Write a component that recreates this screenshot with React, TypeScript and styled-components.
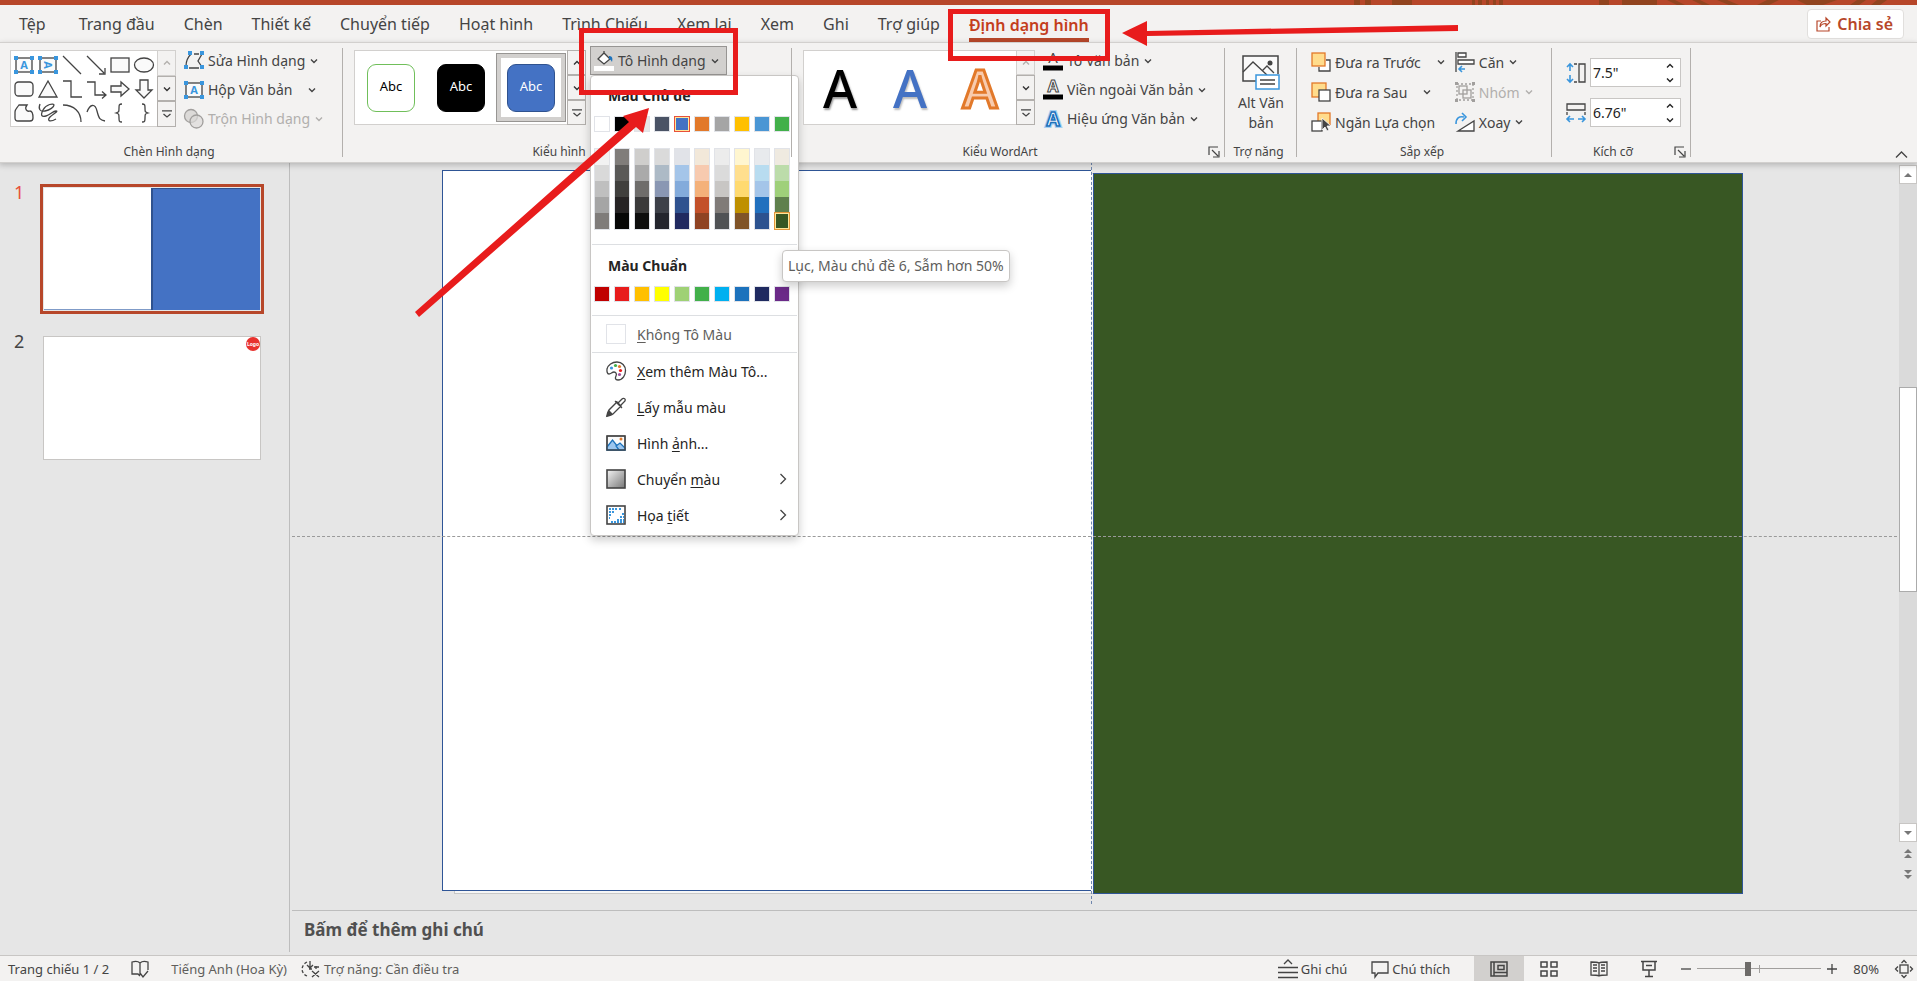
import React from "react";
import styled, { createGlobalStyle, css } from "styled-components";

const ink = "#444444";
const blue = "#3a96dd";
const brand = "#b7472a";
const alert = "#e81c1c";

const GlobalStyle = createGlobalStyle`
  * { box-sizing: border-box; }
  body { margin: 0; background: #e6e6e6; color: ${ink}; font-family: "Noto Sans", "Open Sans", sans-serif; font-size: 14px; }
  button, input, textarea { font: inherit; color: inherit; margin: 0; }
  button { background: none; border: 0; padding: 0; text-align: left; cursor: pointer; }
`;

const Page = styled.div`
  position: relative;
  display: flex;
  flex-direction: column;
  min-height: 100vh;
  overflow: hidden;
`;

const TitleStrip = styled.div`
  display: flex;
  justify-content: flex-end;
  height: 5px;
  background: ${brand};
`;

const Header = styled.header`
  display: flex;
  justify-content: space-between;
  align-items: flex-start;
  height: 38px;
  padding: 0 13px 0 5px;
  background: #f3f2f1;
`;

const Tabs = styled.nav`
  display: flex;
  gap: 1px;
`;

const Tab = styled.button<{ $active?: boolean }>`
  height: 38px;
  padding: 0 14px;
  font-size: 16px;
  line-height: 38px;
  white-space: nowrap;
  ${(p) =>
    p.$active &&
    css`
      color: #c43e1c;
      font-weight: 600;
      span { display: block; height: 36px; border-bottom: 4px solid ${brand}; }
    `}
  &:first-child { margin-right: 4px; }
`;

const Share = styled.button`
  display: flex;
  align-items: center;
  gap: 6px;
  height: 30px;
  margin-top: 4px;
  padding: 0 10px 0 8px;
  background: #fff;
  border: 1px solid #e1dfdd;
  border-radius: 4px;
  color: ${brand};
  font-size: 16px;
  font-weight: 600;
`;

const Ribbon = styled.section`
  position: relative;
  z-index: 5;
  display: grid;
  grid-template-columns: 343px 449px 433px 72px 255px 139px 1fr;
  height: 119px;
  padding-top: 3px;
  background: #f3f2f1;
  box-shadow: 0 0 0 1px #d2d0ce, 0 2px 6px 1px rgba(0, 0, 0, 0.22);
`;

const Group = styled.div`
  position: relative;
  display: flex;
  flex-direction: column;
  &::after {
    content: "";
    position: absolute;
    right: 0;
    top: 2px;
    bottom: 5px;
    width: 1px;
    background: #b3b0ad;
  }
`;

const Body = styled.div<{ $left?: number; $gap?: number }>`
  display: flex;
  align-items: flex-start;
  height: 97px;
  padding-left: ${(p) => p.$left ?? 11}px;
  gap: ${(p) => p.$gap ?? 8}px;
`;

const GroupFooter = styled.div`
  display: flex;
  align-items: center;
  height: 18px;
  padding-right: 5px;
  font-size: 12px;
  line-height: 18px;
`;

const GroupName = styled.span`
  flex: 1;
  text-align: center;
  white-space: nowrap;
`;

const Launcher = styled.button`
  display: flex;
  width: 12px;
  height: 12px;
`;

const Gallery = styled.div<{ $low?: boolean }>`
  display: flex;
  margin-top: 4px;
  height: ${(p) => (p.$low ? 75 : 77)}px;
  background: #fff;
  border: 1px solid #d2d0ce;
`;

const ShapeGrid = styled.div`
  display: grid;
  grid-template-columns: repeat(6, 24px);
  grid-auto-rows: 24px;
  place-items: center;
  padding: 2px 0 0 1px;
  width: 146px;
`;

const StyleRow = styled.div`
  display: flex;
  align-items: center;
  width: 212px;
  padding-left: 1px;
`;

const StyleCell = styled.button<{ $selected?: boolean }>`
  display: flex;
  align-items: center;
  justify-content: center;
  width: 70px;
  height: 69px;
  border: ${(p) => (p.$selected ? "1px solid #979593" : "0")};
  box-shadow: ${(p) => (p.$selected ? "inset 0 0 0 4px #d2d0ce" : "none")};
`;

const StyleTile = styled.span<{ $bg: string; $fg: string; $line: string }>`
  display: block;
  width: 48px;
  height: 48px;
  border: 1px solid ${(p) => p.$line};
  border-radius: 9px;
  background: ${(p) => p.$bg};
  color: ${(p) => p.$fg};
  font-size: 13px;
  line-height: 42px;
  text-align: center;
`;

const ArtLetter = styled.span<{ $kind: "black" | "blue" | "outline" }>`
  font-size: 52px;
  line-height: 60px;
  font-weight: 500;
  ${(p) => p.$kind === "black" && css`color: #000; text-shadow: 1px 2px 2px #0006;`}
  ${(p) => p.$kind === "blue" && css`color: #4472c4; text-shadow: 1px 2px 2px #0004;`}
  ${(p) => p.$kind === "outline" && css`color: #f8cbad; font-weight: 600; -webkit-text-stroke: 3px #e2792a; stroke-linejoin: round;`}
`;

const Scroller = styled.div`
  display: flex;
  flex-direction: column;
  width: 19px;
  margin: -1px -1px -1px auto;
`;

const ScrollButton = styled.button<{ $off?: boolean }>`
  display: flex;
  flex: 1;
  align-items: center;
  justify-content: center;
  background: #f3f2f1;
  border: 1px solid ${(p) => (p.$off ? "#d2d0ce" : "#b3b0ad")};
  color: ${(p) => (p.$off ? "#b3b0ad" : "#333")};
`;

const Commands = styled.div<{ $top?: number; $row?: number }>`
  display: grid;
  grid-auto-rows: ${(p) => p.$row ?? 29}px;
  padding-top: ${(p) => p.$top ?? 0}px;
  justify-items: start;
`;

const Command = styled.button<{ $off?: boolean; $open?: boolean; $wide?: boolean }>`
  display: flex;
  align-items: center;
  gap: 4px;
  white-space: nowrap;
  color: ${(p) => (p.$off ? "#b1afad" : ink)};
  svg:last-child { margin-left: ${(p) => (p.$wide ? 12 : 1)}px; }
  ${(p) =>
    p.$open &&
    css`
      width: 137px;
      padding-left: 3px;
      background: #d2d0ce;
      border: 1px solid #979593;
    `}
`;

const Anchor = styled.div`
  position: relative;
  margin-left: -4px;
`;

const AltButton = styled.button`
  display: flex;
  flex-direction: column;
  align-items: center;
  width: 100%;
  padding-top: 9px;
  line-height: 20px;
  text-align: center;
  svg { margin-bottom: 2px; }
`;

const SizeFields = styled.div`
  display: grid;
  gap: 11px;
  padding-top: 12px;
`;

const SizeField = styled.label`
  display: flex;
  align-items: center;
  gap: 4px;
`;

const SizeBox = styled.span`
  display: flex;
  align-items: center;
  width: 91px;
  height: 29px;
  padding: 0 6px 0 2px;
  background: #fff;
  border: 1px solid #c8c6c4;
  color: #222;
  input { flex: 1; min-width: 0; width: 60px; border: 0; padding: 0; outline: 0; background: none; }
`;

const Spin = styled.span`
  display: grid;
  gap: 8px;
  button { display: flex; }
`;

const Collapse = styled.button`
  align-self: end;
  justify-self: end;
  padding: 0 9px 3px;
`;

/* Fill menu */
const Menu = styled.div`
  position: absolute;
  left: 0;
  top: 29px;
  width: 209px;
  padding-bottom: 2px;
  background: #fff;
  border: 1px solid #c8c6c4;
  border-radius: 4px;
  box-shadow: 0 4px 10px rgba(0, 0, 0, 0.2);
  color: #252423;
`;

const MenuHeading = styled.h2<{ $first?: boolean }>`
  margin: 0;
  padding: ${(p) => (p.$first ? "10px 0 0 17px" : "11px 0 0 17px")};
  font-size: 14px;
  font-weight: 700;
  line-height: 20px;
`;

const SwatchRow = styled.div<{ $top: number; $bottom: number }>`
  display: flex;
  gap: 4px;
  padding: ${(p) => p.$top}px 0 ${(p) => p.$bottom}px 3px;
`;

const SwatchColumn = styled.div`
  display: grid;
  grid-auto-rows: 16px;
  border: 1px solid #e1e3e8;
  margin-bottom: -2px;
`;

const Swatch = styled.button<{ $c: string; $framed?: boolean; $pick?: string }>`
  width: ${(p) => (p.$framed ? 16 : 14)}px;
  height: 16px;
  background: ${(p) => p.$c};
  border: ${(p) => (p.$framed ? "1px solid #e1e3e8" : "0")};
  ${(p) =>
    p.$pick &&
    css`
      outline: 1px solid ${p.$pick};
      outline-offset: ${p.$framed ? -1 : 0}px;
      box-shadow: inset 0 0 0 1px #ffe699;
    `}
`;

const Rule = styled.hr`
  height: 1px;
  margin: 0 1px;
  border: 0;
  background: #dddfe2;
`;

const MenuItem = styled.button<{ $soft?: boolean }>`
  display: flex;
  align-items: center;
  gap: 11px;
  width: 100%;
  height: 36px;
  padding: 0 11px 0 15px;
  color: ${(p) => (p.$soft ? "#605e5c" : "#252423")};
  span { flex: 1; white-space: nowrap; }
  u { text-underline-offset: 2px; }
`;

const NoFill = styled.i`
  width: 20px;
  height: 20px;
  border: 1px solid #e1e3e8;
`;

const Tooltip = styled.div`
  position: absolute;
  left: 191px;
  top: 174px;
  padding: 0 5px;
  background: #fff;
  border: 1px solid #c8c6c4;
  border-radius: 4px;
  box-shadow: 0 4px 10px rgba(0, 0, 0, 0.2);
  color: #605e5c;
  line-height: 30px;
  white-space: nowrap;
`;

/* Workspace */
const Workspace = styled.main`
  display: flex;
  flex: 1;
`;

const SlideList = styled.aside`
  width: 290px;
  padding: 22px 0 0 14px;
  border-right: 1px solid #bdbdbd;
  margin-bottom: 3px;
`;

const SlideEntry = styled.button<{ $active?: boolean }>`
  display: flex;
  align-items: flex-start;
  margin-bottom: 19px;
  font-size: 18px;
  line-height: 16px;
  color: ${(p) => (p.$active ? "#e8503a" : ink)};
  > span:first-child { width: 26px; }
`;

const Thumb = styled.span<{ $active?: boolean }>`
  display: flex;
  width: 224px;
  height: 130px;
  border: 3px solid ${(p) => (p.$active ? brand : "transparent")};
  padding: ${(p) => (p.$active ? 1 : 0)}px;
`;

const ThumbHalf = styled.span<{ $blue?: boolean }>`
  flex: 1;
  background: ${(p) => (p.$blue ? "#4472c4" : "#fff")};
  border: solid #2f528f;
  border-width: ${(p) => (p.$blue ? "1px 0 0 2px" : "0")};
  border-bottom: ${(p) => (p.$blue ? "0" : "1px solid #7f9bc8")};
`;

const ThumbBlank = styled.span`
  display: flex;
  flex: 1;
  justify-content: flex-end;
  background: #fff;
  border: 1px solid #c8c6c4;
`;

const Logo = styled.span`
  width: 14px;
  height: 14px;
  border-radius: 50%;
  background: #e8332f;
  color: #fff;
  font-size: 5px;
  font-weight: 700;
  line-height: 14px;
  text-align: center;
`;

const Editor = styled.div`
  display: flex;
  flex: 1;
  flex-direction: column;
  margin-left: 2px;
`;

const CanvasRow = styled.div`
  display: flex;
  flex: 1;
  border-bottom: 1px solid #bdbdbd;
`;

const Canvas = styled.div`
  position: relative;
  display: flex;
  flex: 1;
  padding: 8px 156px 16px 150px;
`;

const WhiteShape = styled.div`
  flex: 1;
  margin-bottom: 3px;
  background: #fff;
  border: 1px solid #2f5597;
  border-right: 0;
  box-shadow: 12px 3px 0 -1px #f6f6f6, 12px 3px 0 0 #c8c8c8;
`;

const GreenShape = styled.div`
  position: relative;
  flex: 1;
  margin: 3px 0 0 2px;
  background: #385723;
  border: 1px solid #2f5597;
`;

const GuideH = styled.div`
  position: absolute;
  left: 0;
  right: 2px;
  top: 50%;
  border-top: 1px dashed #9a9a9a;
`;

const GuideV = styled.div`
  position: absolute;
  left: 799px;
  top: 0;
  bottom: 6px;
  border-left: 1px dashed #6f86ad;
`;

const VScroll = styled.div`
  display: flex;
  flex-direction: column;
  width: 18px;
  padding-top: 3px;
`;

const Track = styled.div`
  display: flex;
  flex: 1;
  flex-direction: column;
  background: #dadada;
`;

const Knob = styled.div`
  height: 32%;
  margin: auto 0;
  background: #fff;
  border: 1px solid #ababab;
  transform: translateY(-14px);
`;

const Step = styled.button<{ $plain?: boolean }>`
  display: flex;
  align-items: center;
  justify-content: center;
  height: ${(p) => (p.$plain ? 22 : 19)}px;
  background: ${(p) => (p.$plain ? "none" : "#fff")};
  border: ${(p) => (p.$plain ? "0" : "1px solid #c8c6c4")};
`;

const StepFoot = styled.div`
  display: grid;
  padding-bottom: 24px;
`;

const Notes = styled.textarea`
  display: block;
  width: 100%;
  height: 44px;
  padding: 7px 12px;
  border: 0;
  outline: 0;
  resize: none;
  background: #e6e6e6;
  font-size: 17px;
  font-weight: 700;
  line-height: 24px;
  &::placeholder { color: #505050; opacity: 1; }
`;

const Status = styled.footer`
  display: flex;
  justify-content: space-between;
  height: 26px;
  padding: 0 4px 0 8px;
  background: #f3f2f1;
  border-top: 1px solid #c8c6c4;
  font-size: 13px;
`;

const Cluster = styled.div<{ $gap: number }>`
  display: flex;
  align-items: center;
  gap: ${(p) => p.$gap}px;
`;

const StatusButton = styled.button<{ $soft?: boolean }>`
  display: flex;
  align-items: center;
  gap: 3px;
  white-space: nowrap;
  color: ${(p) => (p.$soft ? "#605e5c" : ink)};
`;

const Views = styled.div`
  display: flex;
`;

const ViewButton = styled.button<{ $active?: boolean }>`
  display: flex;
  align-items: center;
  justify-content: center;
  width: 50px;
  height: 25px;
  background: ${(p) => (p.$active ? "#d2d0ce" : "none")};
`;

const ZoomRange = styled.input`
  appearance: none;
  width: 124px;
  height: 18px;
  background: linear-gradient(#a19f9d, #a19f9d) center / 100% 1px no-repeat,
    linear-gradient(#a19f9d, #a19f9d) center / 1px 8px no-repeat;
  &::-webkit-slider-thumb { appearance: none; width: 6px; height: 14px; background: #6d6b69; }
`;

const Frame = styled.div<{ $x: number; $y: number; $w: number; $h: number }>`
  position: absolute;
  z-index: 9;
  left: ${(p) => p.$x}px;
  top: ${(p) => p.$y}px;
  width: ${(p) => p.$w}px;
  height: ${(p) => p.$h}px;
  border: 5px solid ${alert};
  pointer-events: none;
`;

const Arrows = styled.svg`
  position: absolute;
  z-index: 9;
  left: 0;
  top: 0;
  pointer-events: none;
`;

const Glyph = styled.svg`
  display: block;
  flex: none;
  overflow: visible;
`;

type IconProps = { s?: number; h?: number; children: React.ReactNode };
const Icon = ({ s = 20, h, children }: IconProps) => (
  <Glyph width={s} height={h ?? s} viewBox={`0 0 ${s} ${h ?? s}`} fill="none" stroke={ink} strokeWidth={1.3} aria-hidden="true">
    {children}
  </Glyph>
);

const Chevron = ({ up }: { up?: boolean }) => (
  <Glyph width={8} height={6} viewBox="0 0 8 6" fill="none" stroke="currentColor" strokeWidth={1.4} aria-hidden="true">
    <path d={up ? "M1 4.5 4 1.5 7 4.5" : "M1 1.5 4 4.5 7 1.5"} />
  </Glyph>
);

const handles = (pts: number[][]) => pts.map(([x, y], i) => <rect key={i} x={x} y={y} width="4" height="4" fill={blue} stroke="none" />);
const corners = [[0, 1], [16, 1], [0, 15], [16, 15]];

const BoxA = ({ turn }: { turn?: boolean }) => (
  <Icon>
    <rect x="2" y="3" width="16" height="14" fill="#fafafa" />
    {handles(corners)}
    <text x="10" y="14" textAnchor="middle" fontSize="11" fontWeight="700" fill={blue} stroke="none" transform={turn ? "rotate(90 10 10)" : undefined}>A</text>
  </Icon>
);

const shapes: React.ReactNode[] = [
  <path d="M1 1 19 19" />,
  <path d="M1 1 18 18M19 13v6h-6" />,
  <rect x="1" y="3" width="18" height="14" fill="#fafafa" />,
  <ellipse cx="10" cy="10" rx="9.5" ry="7" fill="#fafafa" />,
  <rect x="1" y="3" width="18" height="14" rx="3.5" fill="#fafafa" />,
  <path d="M10 2 19 18H1Z" fill="#fafafa" />,
  <path d="M1 2h8v16h11" />,
  <path d="M1 3h8v13h10M16 12.500l4 3.500-4 3.500" />,
  <path d="M1 7h10V3l8 7-8 7v-4H1Z" fill="#fafafa" />,
  <path d="M6 1h8v10h4l-8 8-8-8h4Z" fill="#fafafa" />,
  <path d="M5 2h8c-3 4 0 7 3 6 3 0 3 4 3 7 0 2-1 3-3 3H4c-2 0-3-1-3-3V9c0-3 2-4 4-7Z" fill="#fafafa" />,
  <path d="M2 1c-2 5 0 8 5 7s9-4 9-6-8-1-11 5-1 7 3 6 7-5 10-5-3 3-6 6-1 6 6 2" />,
  <path d="M1 2c11 0 18 7 18 17" />,
  <path d="M1 9C4 1 9 0 11 8s3 9 8 10" />,
  <path d="M12 1c-3 0-3 1-3 4 0 4 0 4-3 5 3 1 3 1 3 5 0 3 0 4 3 4" />,
  <path d="M8 1c3 0 3 1 3 4 0 4 0 4 3 5-3 1-3 1-3 5 0 3 0 4-3 4" />,
];

const More = () => (
  <Icon s={10} h={8}><path d="M0 .8h10M1.500 4 5 7l3.500-3" /></Icon>
);

const GalleryScroller = ({ topOff }: { topOff?: boolean }) => (
  <Scroller>
    <ScrollButton $off={topOff} aria-label="Lên"><Chevron up /></ScrollButton>
    <ScrollButton aria-label="Xuống"><Chevron /></ScrollButton>
    <ScrollButton aria-label="Thêm"><More /></ScrollButton>
  </Scroller>
);

const LaunchIcon = ({ label }: { label: string }) => (
  <Launcher aria-label={label}>
    <Icon s={12}><path d="M1 9V1h9M4 4l6 6M11 5v6H5" strokeWidth="1.2" /></Icon>
  </Launcher>
);

const themeMain = ["#ffffff", "#000000", "#e7e6e6", "#4a5365", "#4472c4", "#e2792a", "#a5a5a5", "#ffc000", "#4a96d4", "#42b04a"];
const themeShades = [
  ["#f2f2f2", "#d9d9d9", "#bfbfbf", "#a5a5a5", "#7f7c7a"],
  ["#807d7a", "#5a5957", "#403f3d", "#262324", "#060606"],
  ["#cfcecc", "#aaaaaa", "#6f6d6b", "#3b3a3a", "#0d0d0d"],
  ["#dadada", "#adbac6", "#8a97b3", "#3d4048", "#23252d"],
  ["#e1e3e8", "#a4c5e9", "#83abdb", "#2f528f", "#20295f"],
  ["#f2e8d9", "#f7caaf", "#f4b17a", "#c3512a", "#8f4323"],
  ["#ececec", "#dbdbdb", "#c8c6c4", "#807b78", "#505255"],
  ["#fff6cf", "#ffdf8e", "#ffda70", "#bf9000", "#805428"],
  ["#e8eaed", "#b8dcf0", "#a4c5e9", "#2170be", "#2c528f"],
  ["#efeae0", "#bcdcaa", "#9fd07a", "#5f804d", "#385723"],
];
const standard = ["#c00000", "#e81c1c", "#ffc000", "#ffff00", "#9fd175", "#42b04a", "#00b0f0", "#1c72bc", "#1f2a60", "#6b2a88"];

const PaletteIcon = () => (
  <Icon>
    <path d="M11 1c5 0 8.500 4 8.500 8.500S17 19 12 19c-3 0-3-2-2-4s0-4-2-4-3 2-5 2S.8 10 1 8c1-4 5-7 10-7Z" />
    <g stroke="none">
      <circle cx="5.500" cy="7" r="1.600" fill="#3a96dd" /><circle cx="9.500" cy="4.500" r="1.600" fill="#42b04a" />
      <circle cx="13.500" cy="5.500" r="1.600" fill="#e2792a" /><circle cx="14.500" cy="9.500" r="1.600" fill="#e81c1c" />
      <circle cx="13.500" cy="13.500" r="1.600" fill="#a0509a" />
    </g>
  </Icon>
);
const DropperIcon = () => (
  <Icon>
    <path d="M1 19c0-3 1-4 2-6l8-8 4 4-8 8c-2 1-3 2-6 2ZM9 4l7 7M12 6l4-4c1-1 4-1 3 2l-4 4" />
    <path d="M1 19l2-5 3 3Z" fill={ink} />
  </Icon>
);
const PhotoIcon = () => (
  <Icon h={16}>
    <rect x="1" y="1" width="18" height="14" fill="#fafafa" />
    <path d="M1 12 6.500 5l8 10H1Z" fill="#9cc6ee" stroke="#1c72bc" /><path d="M10 11l4-3 5 5v2h-6Z" fill="#9cc6ee" stroke="#1c72bc" />
    <circle cx="15" cy="4" r="1.500" fill="#e2792a" stroke="none" />
    <rect x="1" y="1" width="18" height="14" />
  </Icon>
);
const GradientIcon = () => (
  <Icon>
    <defs><linearGradient id="shade" x2="1" y2="1"><stop stopColor="#f4f4f4" /><stop offset="1" stopColor="#777" /></linearGradient></defs>
    <rect x="1" y="1" width="18" height="18" fill="url(#shade)" strokeWidth="1.600" />
  </Icon>
);
const PatternIcon = () => (
  <Icon>
    <rect x="1" y="1" width="18" height="18" fill="#fff" strokeWidth="1.600" />
    <path d="M3 4h8M3 7h5M3 10h3M16 9h2M14 12h4M11 15h7M5 17h13M13 4h2M3 13h1" stroke={blue} strokeWidth="2" strokeDasharray="2 1" />
  </Icon>
);
const Next = () => <Icon s={8} h={12}><path d="M1.500 1 6.500 6 1.500 11" /></Icon>;

const FillMenu = () => (
  <Menu role="menu">
    <MenuHeading $first>Màu Chủ đề</MenuHeading>
    <SwatchRow $top={10} $bottom={16}>
      {themeMain.map((c, i) => <Swatch key={c} $c={c} $framed $pick={i === 4 ? "#e8503a" : undefined} aria-label={`Chủ đề ${i + 1}`} />)}
    </SwatchRow>
    <SwatchRow $top={0} $bottom={16}>
      {themeShades.map((col, i) => (
        <SwatchColumn key={i}>
          {col.map((c, j) => <Swatch key={j} $c={c} $pick={i === 9 && j === 4 ? "#e2963a" : undefined} aria-label={`Sắc độ ${i + 1}.${j + 1}`} />)}
        </SwatchColumn>
      ))}
    </SwatchRow>
    <Rule />
    <MenuHeading>Màu Chuẩn</MenuHeading>
    <SwatchRow $top={10} $bottom={13}>
      {standard.map((c, i) => <Swatch key={c} $c={c} $framed aria-label={`Chuẩn ${i + 1}`} />)}
    </SwatchRow>
    <Rule />
    <MenuItem $soft><NoFill /><span><u>K</u>hông Tô Màu</span></MenuItem>
    <Rule />
    <MenuItem><PaletteIcon /><span><u>X</u>em thêm Màu Tô...</span></MenuItem>
    <MenuItem><DropperIcon /><span><u>L</u>ấy mẫu màu</span></MenuItem>
    <MenuItem><PhotoIcon /><span>Hình <u>ả</u>nh...</span></MenuItem>
    <MenuItem><GradientIcon /><span>Chuyển <u>m</u>àu</span><Next /></MenuItem>
    <MenuItem><PatternIcon /><span>Họa <u>t</u>iết</span><Next /></MenuItem>
    <Tooltip role="tooltip">Lục, Màu chủ đề 6, Sẫm hơn 50%</Tooltip>
  </Menu>
);

const SpinButtons = () => (
  <Spin>
    <button aria-label="Tăng"><Chevron up /></button>
    <button aria-label="Giảm"><Chevron /></button>
  </Spin>
);

const tabs = ["Tệp", "Trang đầu", "Chèn", "Thiết kế", "Chuyển tiếp", "Hoạt hình", "Trình Chiếu", "Xem lại", "Xem", "Ghi", "Trợ giúp", "Định dạng hình"];

const tiles = [
  { bg: "#fff", fg: "#000", line: "#70bf5a" },
  { bg: "#000", fg: "#fff", line: "#000" },
  { bg: "#4472c4", fg: "#fff", line: "#2f528f" },
];

export default function App() {
  return (
    <Page>
      <GlobalStyle />
      <TitleStrip>
        <svg width="570" height="5" aria-hidden="true" fill="#91441f">
          <path d="M7 0h6v5H7ZM18 0h6v5h-6ZM45 0h20v5H45ZM125 0h3v5h-3ZM131 0h4v5h-4ZM139 0h3v5h-3ZM146 0h3v5h-3ZM152 0h4v5h-4ZM252 0h10v5h-10ZM275 0h35v5h-35ZM320 0l10 5h8L328 0ZM345 0l10 5h8L353 0ZM370 0l12 5h10L380 0ZM420 0l-10 5h12l10-5ZM450 0h40l-14 5h-16ZM510 0h9l-7 5h-9ZM530 0h10l-7 5h-9Z" />
        </svg>
      </TitleStrip>
      <Header>
        <Tabs>
          {tabs.map((t, i) => <Tab key={t} $active={i === 11}><span>{t}</span></Tab>)}
        </Tabs>
        <Share>
          <svg width="15" height="16" viewBox="0 0 15 16" fill="none" stroke={brand} strokeWidth="1.2" aria-hidden="true">
            <path d="M5 5H1v10h12v-4M4 11c0-4 2-6 6-6V2l4 4-4 4V7.500c-3 0-5 1-6 3.500Z" />
          </svg>
          Chia sẻ
        </Share>
      </Header>

      <Ribbon>
        <Group>
          <Body $left={10}>
            <Gallery>
              <ShapeGrid>
                <BoxA /><BoxA turn />
                {shapes.map((s, i) => <Icon key={i}>{s}</Icon>)}
              </ShapeGrid>
              <GalleryScroller topOff />
            </Gallery>
            <Commands>
              <Command>
                <Icon><path d="M7 3 C3 7 2 10 2 15M5 17h10M18 3l-4 7 4 6M10 3h5" />{handles([[4, 0], [16, 0], [0, 14], [16, 14]])}</Icon>
                Sửa Hình dạng<Chevron />
              </Command>
              <Command $wide><BoxA />Hộp Văn bản<Chevron /></Command>
              <Command $off>
                <Icon><g stroke="#a19f9d"><circle cx="7" cy="7" r="6.500" fill="#dcdad8" /><circle cx="12.500" cy="12.500" r="6.500" fill="#dcdad8" fillOpacity=".7" /></g></Icon>
                Trộn Hình dạng<Chevron />
              </Command>
            </Commands>
          </Body>
          <GroupFooter><GroupName>Chèn Hình dạng</GroupName></GroupFooter>
        </Group>

        <Group>
          <Body>
            <Gallery $low>
              <StyleRow>
                {tiles.map((t, i) => (
                  <StyleCell key={i} $selected={i === 2}><StyleTile $bg={t.bg} $fg={t.fg} $line={t.line}>Abc</StyleTile></StyleCell>
                ))}
              </StyleRow>
              <GalleryScroller />
            </Gallery>
            <Anchor>
              <Commands>
                <Command $open>
                  <Icon>
                    <path d="M4 8 10 2l6 6-6 5ZM10 2V0" fill="#fff" /><path d="M15 5c3 0 4 2 3 6-1-2-2-3-3-3Z" fill="#1c72bc" stroke="none" />
                    <path d="M0 17.500h20" stroke="#fff" strokeWidth="5" />
                  </Icon>
                  Tô Hình dạng<Chevron />
                </Command>
              </Commands>
              <FillMenu />
            </Anchor>
          </Body>
          <GroupFooter><GroupName>Kiểu hình</GroupName><LaunchIcon label="Định dạng hình" /></GroupFooter>
        </Group>

        <Group>
          <Body>
            <Gallery $low>
              <StyleRow>
                <StyleCell><ArtLetter $kind="black">A</ArtLetter></StyleCell>
                <StyleCell><ArtLetter $kind="blue">A</ArtLetter></StyleCell>
                <StyleCell><ArtLetter $kind="outline">A</ArtLetter></StyleCell>
              </StyleRow>
              <GalleryScroller topOff />
            </Gallery>
            <Commands>
              <Command>
                <Icon><text x="10" y="12" textAnchor="middle" fontSize="15" fill={ink} stroke="none">A</text><path d="M0 17h20" stroke="#000" strokeWidth="5" /></Icon>
                Tô Văn bản<Chevron />
              </Command>
              <Command>
                <Icon><text x="10" y="12" textAnchor="middle" fontSize="16" fontWeight="700" fill="#fff" stroke={ink} strokeWidth="1">A</text><path d="M0 17h20" stroke="#000" strokeWidth="5" /></Icon>
                Viền ngoài Văn bản<Chevron />
              </Command>
              <Command>
                <Icon><g fontSize="19" fontWeight="700" textAnchor="middle"><text x="10" y="17" fill="none" stroke="#a6cff2" strokeWidth="4" aria-hidden="true">A</text><text x="10" y="17" fill="#fff" stroke="#1c72bc" strokeWidth="1.600">A</text></g></Icon>
                Hiệu ứng Văn bản<Chevron />
              </Command>
            </Commands>
          </Body>
          <GroupFooter><GroupName>Kiểu WordArt</GroupName><LaunchIcon label="Kiểu WordArt" /></GroupFooter>
        </Group>

        <Group>
          <Body $left={0}>
            <AltButton>
              <Icon s={38} h={36}>
                <path d="M18 26H1V1h35v18" fill="#fafafa" strokeWidth="1.500" /><path d="M1 17 11 7l14 13M20 16l5-5 7 7" />
                <circle cx="28" cy="8" r="2.500" fill={ink} stroke="none" />
                <rect x="14" y="20" width="23" height="14" fill="#fff" stroke={blue} strokeWidth="1.500" /><path d="M18 25h15M18 29h15" />
              </Icon>
              Alt Văn<br />bản
            </AltButton>
          </Body>
          <GroupFooter><GroupName>Trợ năng</GroupName></GroupFooter>
        </Group>

        <Group>
          <Body $left={14} $gap={10}>
            <Commands $top={1} $row={30}>
              <Command $wide>
                <Icon><path d="M15 8h4v11H8v-4" fill="#fff" /><rect x="1" y="1" width="13" height="13" fill="#ffdc8c" stroke="#e2792a" /></Icon>
                Đưa ra Trước<Chevron />
              </Command>
              <Command $wide>
                <Icon><rect x="1" y="1" width="14" height="14" fill="#ffdc8c" stroke="#e2792a" /><rect x="8" y="8" width="11" height="11" fill="#fff" /></Icon>
                Đưa ra Sau<Chevron />
              </Command>
              <Command>
                <Icon><rect x="7" y="1" width="12" height="12" fill="#ffdc8c" stroke="#e2792a" /><rect x="1" y="9" width="10" height="10" fill="#fff" /><path d="M11 6v12l3-3 2 4 2-1-2-4h4Z" fill={ink} stroke="#fff" strokeWidth=".8" /></Icon>
                <span>Ngăn Lựa chọn</span>
              </Command>
            </Commands>
            <Commands $top={1} $row={30}>
              <Command>
                <Icon><path d="M1 0v20M3 1h8v4H3ZM3 8h16v4H3Z" fill="#fff" /><path d="M10 17H4M7 14l-3 3 3 3" stroke={blue} strokeWidth="1.600" /></Icon>
                Căn<Chevron />
              </Command>
              <Command $off>
                <Icon><g stroke="#a19f9d"><path d="M2 2h16v16H2Z" strokeDasharray="2 2" /><rect x="4" y="4" width="8" height="8" /><rect x="8" y="8" width="8" height="8" /></g><path d="M0 0h3v3H0ZM17 0h3v3h-3ZM0 17h3v3H0ZM17 17h3v3h-3Z" fill="#a19f9d" stroke="none" /></Icon>
                Nhóm<Chevron />
              </Command>
              <Command>
                <Icon><path d="M19 9v10H3Z" fill="#fff" /><path d="M1 12C1 6 4 4 9 5M7 1l4 4-4 4" stroke={blue} strokeWidth="1.600" /></Icon>
                Xoay<Chevron />
              </Command>
            </Commands>
          </Body>
          <GroupFooter><GroupName>Sắp xếp</GroupName></GroupFooter>
        </Group>

        <Group>
          <Body $left={14}>
            <SizeFields>
              <SizeField>
                <Icon><path d="M13 1h6v18h-6ZM8 1h3M8 19h3" /><path d="M4 1v7M4 12v7M1 4l3-3 3 3M1 16l3 3 3-3" stroke={blue} strokeWidth="1.600" /></Icon>
                <SizeBox><input aria-label="Chiều cao" defaultValue={'7.5"'} /><SpinButtons /></SizeBox>
              </SizeField>
              <SizeField>
                <Icon><path d="M1 1h18v6H1ZM1 9v3M19 9v3" /><path d="M1 16h7M12 16h7M4 13l-3 3 3 3M16 13l3 3-3 3" stroke={blue} strokeWidth="1.600" /></Icon>
                <SizeBox><input aria-label="Chiều rộng" defaultValue={'6.76"'} /><SpinButtons /></SizeBox>
              </SizeField>
            </SizeFields>
          </Body>
          <GroupFooter><GroupName>Kích cỡ</GroupName><LaunchIcon label="Kích cỡ" /></GroupFooter>
        </Group>
        <Collapse aria-label="Thu gọn"><Icon s={13} h={8}><path d="M1 6.500 6.500 1 12 6.500" /></Icon></Collapse>
      </Ribbon>

      <Workspace>
        <SlideList>
          <SlideEntry $active>
            <span>1</span>
            <Thumb $active><ThumbHalf /><ThumbHalf $blue /></Thumb>
          </SlideEntry>
          <SlideEntry>
            <span>2</span>
            <Thumb><ThumbBlank><Logo>Logo</Logo></ThumbBlank></Thumb>
          </SlideEntry>
        </SlideList>
        <Editor>
          <CanvasRow>
            <Canvas>
              <WhiteShape />
              <GreenShape />
              <GuideH />
              <GuideV />
            </Canvas>
            <VScroll>
              <Step aria-label="Cuộn lên"><Icon s={8} h={4}><path d="M0 4 4 0l4 4Z" fill="#777" stroke="none" /></Icon></Step>
              <Track><Knob /></Track>
              <Step aria-label="Cuộn xuống"><Icon s={8} h={4}><path d="M0 0h8L4 4Z" fill="#777" stroke="none" /></Icon></Step>
              <StepFoot>
                <Step $plain aria-label="Trang trước"><Icon s={8} h={10}><path d="M0 5 4 1l4 4ZM0 10l4-4 4 4Z" fill="#777" stroke="none" /></Icon></Step>
                <Step $plain aria-label="Trang sau"><Icon s={8} h={10}><path d="M0 0h8L4 4ZM0 5h8L4 9Z" fill="#777" stroke="none" /></Icon></Step>
              </StepFoot>
            </VScroll>
          </CanvasRow>
          <Notes aria-label="Ghi chú" placeholder="Bấm để thêm ghi chú" />
        </Editor>
      </Workspace>

      <Status>
        <Cluster $gap={22}>
          <StatusButton>Trang chiếu 1 / 2</StatusButton>
          <StatusButton aria-label="Chính tả"><Icon s={18}><path d="M9 3v12M9 3C7 1 4 1 1 2v12h6l2 2M9 3c2-2 5-2 8-1v8M9 13l3 4 5-6" /></Icon></StatusButton>
          <Cluster $gap={14}>
            <StatusButton $soft>Tiếng Anh (Hoa Kỳ)</StatusButton>
            <StatusButton $soft>
              <Icon s={20} h={18}><path d="M6 2C0 5-1 13 6 16" strokeDasharray="3 2" /><path d="M9 1v6M6 5l3 3 3-3M15 6v3M13 7h5M11 11l7 6M18 11l-7 6M8 9h3" /></Icon>
              Trợ năng: Cần điều tra
            </StatusButton>
          </Cluster>
        </Cluster>
        <Cluster $gap={16}>
          <Cluster $gap={24}>
            <StatusButton><Icon><path d="M6 5 10 1l4 4M0 8.500h20M0 13.500h20M0 18.500h20" /></Icon>Ghi chú</StatusButton>
            <StatusButton><Icon s={18}><path d="M1 2h16v11H7l-3 4v-4H1Z" /></Icon>Chú thích</StatusButton>
            <Cluster $gap={7}>
              <Views>
                <ViewButton $active aria-label="Thường"><Icon s={18} h={16}><path d="M1 1h16v14H1ZM4 1v14M4 11.500h13M8 4.500h6v4H8Z" strokeWidth="1.500" /></Icon></ViewButton>
                <ViewButton aria-label="Sắp xếp trang"><Icon s={18} h={16}><path d="M1 1h6v5H1ZM11 1h6v5h-6ZM1 10h6v5H1ZM11 10h6v5h-6Z" strokeWidth="1.500" /></Icon></ViewButton>
                <ViewButton aria-label="Đọc"><Icon s={18} h={16}><path d="M9 2v13M9 2C7 1 4 1 1 1v13c3 0 6 0 8 1 2-1 5-1 8-1V1c-3 0-6 0-8 1M3 4h4M3 7h4M3 10h4M11 4h4M11 7h4M11 10h4" /></Icon></ViewButton>
                <ViewButton aria-label="Trình chiếu"><Icon s={16} h={18}><path d="M0 1.500h16M2 2v8h12V2M5 5.500h6M8 10v6M4 16.500h8" strokeWidth="1.500" /></Icon></ViewButton>
              </Views>
              <Cluster $gap={6}>
                <button aria-label="Thu nhỏ"><Icon s={10}><path d="M0 5h10" /></Icon></button>
                <ZoomRange type="range" aria-label="Thu phóng" min={0} max={100} defaultValue={40} />
                <button aria-label="Phóng to"><Icon s={10}><path d="M0 5h10M5 0v10" /></Icon></button>
              </Cluster>
            </Cluster>
          </Cluster>
          <StatusButton>80%</StatusButton>
          <StatusButton aria-label="Vừa cửa sổ"><Icon s={18}><rect x="5" y="5" width="8" height="8" /><path d="M6.500 3 9 .5 11.500 3M6.500 15 9 17.500l2.500-2.500M3 6.500.5 9 3 11.500M15 6.500 17.500 9 15 11.500" /></Icon></StatusButton>
        </Cluster>
      </Status>

      <Frame $x={948} $y={9} $w={162} $h={52} />
      <Frame $x={579} $y={28} $w={159} $h={67} />
      <Arrows width="1460" height="320" aria-hidden="true" fill={alert}>
        <path d="M1458 25v6L1147 36v10l-25-13 25-12v10Z" />
        <path d="M415 312 629 122l-6-6 26-8-6 25-7-6L419 317Z" />
      </Arrows>
    </Page>
  );
}
